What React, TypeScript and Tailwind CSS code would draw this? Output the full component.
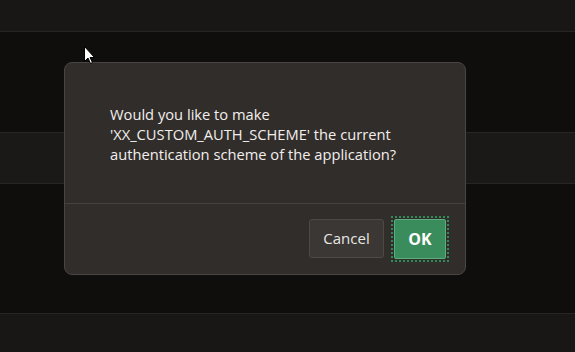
export default function App() {
  return (
    <div
      className="relative w-[575px] h-[352px] overflow-hidden bg-[#0f0e0d]"
      style={{ fontFamily: '"Open Sans", "Noto Sans", sans-serif' }}
    >
      {/* background rows */}
      <div className="flex flex-col">
        <div className="h-[32px] bg-[#181716] border-b border-[#262523]" />
        <div className="h-[100px]" />
        <div className="h-[52px] bg-[#1a1918] border-y border-[#282624]" />
        <div className="h-[129px]" />
        <div className="h-[39px] bg-[#181716] border-t border-[#282624]" />
      </div>

      {/* dialog */}
      <div className="absolute left-[64px] top-[62px] w-[402px] h-[213px] rounded-[8px] border border-[#4a4542] bg-[#312d2a] flex flex-col">
        <div className="flex-1 pl-[45px] pr-[30px] pt-[41px]">
          <p className="text-[14.7px] leading-[20px] text-[#f1efed]">
            Would you like to make
            <br />
            'XX_CUSTOM_AUTH_SCHEME' the current
            <br />
            authentication scheme of the application?
          </p>
        </div>
        <div className="h-[71px] border-t border-[#45413e] flex items-center justify-end gap-[9px] pr-[18px] pb-[1px]">
          <button className="h-[39px] w-[75px] rounded-[3px] border border-[#4d4946] bg-[#3b3734] text-[15px] text-[#e9e7e4]">
            Cancel
          </button>
          <div className="p-[1px] outline-2 outline-dotted outline-[#2f8a57]">
            <button className="h-[40px] w-[52px] rounded-[2px] border border-[#5cae7f] bg-[#3a8c5d] text-[16px] font-bold text-white">
              OK
            </button>
          </div>
        </div>
      </div>

      {/* mouse pointer */}
      <svg className="absolute left-[84px] top-[46px]" width="12" height="19" viewBox="0 0 12 19">
        <path d="M0.5 0.5 L0.5 15.5 L4 12 L6.5 17.5 L8.5 16.5 L6 11.5 L10.5 11.5 Z" fill="#fff" stroke="#000" strokeWidth="1" />
      </svg>
    </div>
  );
}
